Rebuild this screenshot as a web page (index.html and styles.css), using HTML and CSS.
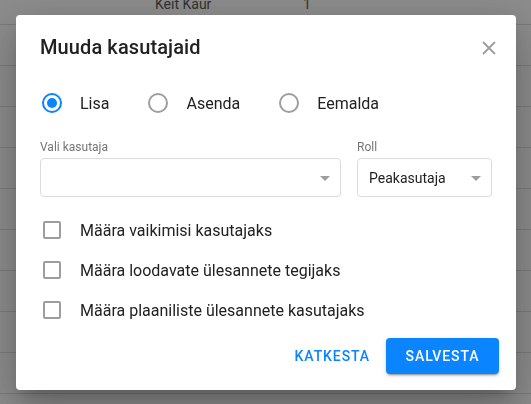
FILE: index.html
```html
<!DOCTYPE html>
<html lang="et">
<head>
<meta charset="utf-8">
<title>Muuda kasutajaid</title>
<link rel="stylesheet" href="styles.css">
</head>
<body>
<div class="page">
  <div class="rows">
    <div class="row"><span class="c-name">Keit Kaur</span><span class="c-num">1</span></div>
    <div class="row"></div>
    <div class="row"></div>
    <div class="row"></div>
    <div class="row"></div>
    <div class="row"></div>
    <div class="row"></div>
    <div class="row"></div>
    <div class="row"></div>
    <div class="row"></div>
    <div class="row"></div>
  </div>
</div>
<div class="overlay">
  <div class="dialog">
    <div class="header">
      <h1 class="title">Muuda kasutajaid</h1>
      <button class="close" aria-label="Sulge">
        <svg width="14" height="14" viewBox="0 0 14 14"><path d="M1 1 L13 13 M13 1 L1 13" stroke="#9e9e9e" stroke-width="1.8" fill="none"/></svg>
      </button>
    </div>
    <div class="radios">
      <label class="radio"><span class="dot on"></span><span class="rlabel">Lisa</span></label>
      <label class="radio"><span class="dot"></span><span class="rlabel">Asenda</span></label>
      <label class="radio"><span class="dot"></span><span class="rlabel">Eemalda</span></label>
    </div>
    <div class="fields">
      <div class="field f-user">
        <div class="flabel">Vali kasutaja</div>
        <div class="select"><span class="value"></span><span class="arrow"></span></div>
      </div>
      <div class="field f-role">
        <div class="flabel">Roll</div>
        <div class="select"><span class="value">Peakasutaja</span><span class="arrow"></span></div>
      </div>
    </div>
    <div class="checks">
      <label class="check"><span class="box"></span><span class="clabel">Määra vaikimisi kasutajaks</span></label>
      <label class="check"><span class="box"></span><span class="clabel">Määra loodavate ülesannete tegijaks</span></label>
      <label class="check"><span class="box"></span><span class="clabel">Määra plaaniliste ülesannete kasutajaks</span></label>
    </div>
    <div class="actions">
      <button class="btn text">Katkesta</button>
      <button class="btn primary">Salvesta</button>
    </div>
  </div>
</div>
</body>
</html>
```

FILE: styles.css
```css
* { box-sizing: border-box; }
html, body { margin: 0; padding: 0; }
body {
  width: 531px;
  height: 404px;
  overflow: hidden;
  background: #fff;
  font-family: Roboto, "Liberation Sans", Arial, sans-serif;
  color: #212121;
}
.page {
  height: 404px;
  overflow: hidden;
}
.rows {
  margin-top: -16px;
}
.row {
  height: 41px;
  border-bottom: 1px solid #dedede;
  display: flex;
  align-items: center;
  font-size: 14px;
  color: #5a5a5a;
}
.c-name { margin-left: 155px; width: 148px; }

.overlay {
  position: fixed;
  inset: 0;
  background: rgba(0, 0, 0, 0.45);
  padding: 15px 0 0 16px;
}
.dialog {
  width: 500px;
  height: 375px;
  background: #fff;
  border-radius: 4px;
  padding: 16px 24px 16px 24px;
  box-shadow: 0 11px 15px -7px rgba(0,0,0,.2), 0 24px 38px 3px rgba(0,0,0,.14), 0 9px 46px 8px rgba(0,0,0,.12);
  display: flex;
  flex-direction: column;
}
.header {
  height: 32px;
  display: flex;
  align-items: center;
  justify-content: space-between;
}
.title {
  margin: 0;
  font-size: 20px;
  font-weight: 500;
  color: #212121;
  letter-spacing: 0.1px;
}
.close {
  border: 0;
  background: none;
  padding: 0;
  width: 14px;
  height: 14px;
  margin: 2px -4px 0 0;
  display: flex;
}

.radios {
  margin-top: 30px;
  height: 20px;
  display: flex;
  align-items: center;
  gap: 39px;
  padding-left: 2px;
}
.radio {
  display: flex;
  align-items: center;
  gap: 18px;
  font-size: 16px;
  color: #212121;
}
.dot {
  width: 20px;
  height: 20px;
  border-radius: 50%;
  border: 2px solid #9e9e9e;
  display: flex;
  align-items: center;
  justify-content: center;
}
.dot.on { border-color: #0a84ff; }
.dot.on::after {
  content: "";
  width: 10px;
  height: 10px;
  border-radius: 50%;
  background: #0a84ff;
}

.fields {
  margin-top: 26px;
  display: flex;
  gap: 16px;
}
.f-user { width: 301px; }
.f-role { width: 135px; }
.flabel {
  font-size: 12px;
  line-height: 16px;
  color: #757575;
  margin-bottom: 3px;
}
.select {
  height: 39px;
  border: 1px solid #dcdcdc;
  border-radius: 4px;
  display: flex;
  align-items: center;
  justify-content: space-between;
  padding: 0 10px 0 11px;
  font-size: 14px;
  color: #212121;
}
.arrow {
  width: 0;
  height: 0;
  border-left: 5px solid transparent;
  border-right: 5px solid transparent;
  border-top: 5px solid #9e9e9e;
  margin-top: 2px;
}

.checks {
  margin-top: 13px;
  display: flex;
  flex-direction: column;
}
.check {
  height: 40px;
  display: flex;
  align-items: center;
  font-size: 16px;
  color: #212121;
}
.box {
  width: 18px;
  height: 18px;
  border: 2px solid #9e9e9e;
  border-radius: 2px;
  margin-left: 3px;
  margin-right: 19px;
}

.actions {
  margin: 8px -7px 0 0;
  display: flex;
  justify-content: flex-end;
  align-items: center;
}
.btn {
  font-family: Roboto, "Liberation Sans", Arial, sans-serif;
  font-size: 14px;
  font-weight: 500;
  text-transform: uppercase;
  letter-spacing: 0.9px;
  height: 36px;
  border: 0;
  border-radius: 4px;
  cursor: pointer;
}
.btn.text {
  background: none;
  color: #0a84ff;
  padding: 0 16px;
}
.btn.primary {
  background: #0a84ff;
  color: #fff;
  width: 113px;
  padding: 0;
  box-shadow: 0 3px 1px -2px rgba(0,0,0,.2), 0 2px 2px 0 rgba(0,0,0,.14), 0 1px 5px 0 rgba(0,0,0,.12);
}
```
